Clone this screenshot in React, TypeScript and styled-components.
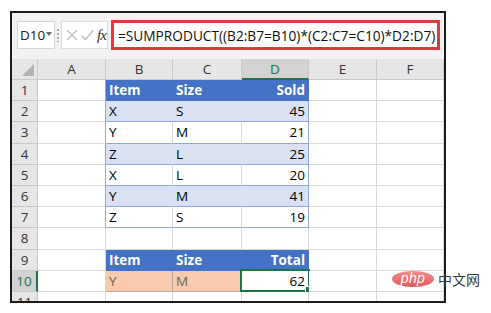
import React from "react";
import styled, { createGlobalStyle } from "styled-components";

const GlobalStyle = createGlobalStyle`
  html, body {
    margin: 0;
    padding: 0;
    background: #ffffff;
  }
  body {
    font-family: "Open Sans", "Liberation Sans", sans-serif;
    color: #000;
  }
`;

const GREEN = "#217346";
const GRID = "#d9d9d9";
const BLUE = "#4472c4";
const BAND = "#d9e1f2";
const TBORDER = "#8ea9db";
const ORANGE = "#f8cbad";

const COLS = ["A", "B", "C", "D", "E", "F"];
const WIDTHS = [26, 68, 67, 69, 67, 68, 67];

const Page = styled.div`
  position: relative;
  width: 491px;
  height: 313px;
  padding: 11px 0 0 10px;
  box-sizing: border-box;
`;

const Frame = styled.div`
  width: 436px;
  height: 292px;
  box-sizing: border-box;
  border: 2px solid #1c1c1c;
  overflow: hidden;
  background: #fff;
  display: flex;
  flex-direction: column;
`;

const FormulaBar = styled.div`
  height: 46px;
  flex: none;
  box-sizing: border-box;
  background: #f3f3f3;
  display: flex;
  align-items: flex-start;
  padding: 8px 0 0 5px;
  gap: 2px;
`;

const NameBox = styled.div`
  width: 38px;
  height: 28px;
  box-sizing: border-box;
  background: #fff;
  border: 1px solid #d4d4d4;
  display: flex;
  align-items: center;
  padding-left: 2px;
  font-size: 13.5px;
  color: #222;
  gap: 1px;
`;

const Caret = styled.span`
  width: 0;
  height: 0;
  border-left: 3px solid transparent;
  border-right: 3px solid transparent;
  border-top: 4px solid #666;
  margin-top: -2px;
`;

const Dots = styled.div`
  width: 2px;
  height: 14px;
  margin-top: 7px;
  background-image: radial-gradient(circle, #a6a6a6 0.8px, transparent 1px);
  background-size: 2px 4px;
`;

const FxBox = styled.div`
  width: 47px;
  height: 28px;
  box-sizing: border-box;
  background: #fff;
  border: 1px solid #dcdcdc;
  display: flex;
  align-items: center;
  padding-left: 3px;
  gap: 1px;
`;

const Fx = styled.span`
  font-family: "Liberation Serif", "DejaVu Serif", serif;
  font-style: italic;
  font-size: 15px;
  color: #333;
  margin-left: 1px;
  letter-spacing: -1px;
`;

const FormulaBox = styled.div`
  width: 329px;
  height: 30px;
  box-sizing: border-box;
  border: 3px solid #e0393e;
  background: #fff;
  display: flex;
  align-items: center;
  padding-left: 4px;
  font-size: 13.7px;
  color: #111;
  white-space: nowrap;
  margin-left: 1px;
  margin-top: -1px;
`;

const Grid = styled.div`
  display: grid;
  grid-template-columns: ${WIDTHS.map((w) => `${w}px`).join(" ")};
  grid-template-rows: 21px;
  grid-auto-rows: 21.2px;
`;

const Corner = styled.div`
  position: relative;
  background: #e6e6e6;
  border-right: 1px solid #c8c8c8;
  border-bottom: 1px solid #c8c8c8;
  box-sizing: border-box;

  &::after {
    content: "";
    position: absolute;
    right: 3px;
    bottom: 3px;
    width: 0;
    height: 0;
    border-left: 12px solid transparent;
    border-bottom: 12px solid #b3b3b3;
  }
`;

const ColHead = styled.div<{ $active?: boolean }>`
  box-sizing: border-box;
  background: ${(p) => (p.$active ? "#d2d2d2" : "#e6e6e6")};
  color: ${(p) => (p.$active ? GREEN : "#333")};
  border-right: 1px solid #c8c8c8;
  border-bottom: ${(p) => (p.$active ? `2px solid ${GREEN}` : "1px solid #c8c8c8")};
  font-size: 13.5px;
  display: flex;
  align-items: center;
  justify-content: center;
  padding-top: ${(p) => (p.$active ? "1px" : "0")};
`;

const RowHead = styled.div<{ $active?: boolean }>`
  box-sizing: border-box;
  background: ${(p) => (p.$active ? "#d2d2d2" : "#e6e6e6")};
  color: ${(p) => (p.$active ? GREEN : "#333")};
  border-right: ${(p) => (p.$active ? `2px solid ${GREEN}` : "1px solid #c8c8c8")};
  border-bottom: 1px solid #c8c8c8;
  font-size: 13.5px;
  display: flex;
  align-items: center;
  justify-content: center;
`;

type CellStyle = {
  bg?: string;
  rb?: string;
  bb?: string;
  color?: string;
  bold?: boolean;
  right?: boolean;
};

const Cell = styled.div<{
  $bg: string;
  $rb: string;
  $bb: string;
  $color: string;
  $bold: boolean;
  $right: boolean;
}>`
  position: relative;
  box-sizing: border-box;
  background: ${(p) => p.$bg};
  border-right: 1px solid ${(p) => p.$rb};
  border-bottom: 1px solid ${(p) => p.$bb};
  color: ${(p) => p.$color};
  font-weight: ${(p) => (p.$bold ? 700 : 400)};
  font-size: 13.5px;
  display: flex;
  align-items: center;
  justify-content: ${(p) => (p.$right ? "flex-end" : "flex-start")};
  padding: 0 3px;
  white-space: nowrap;
`;

const Selection = styled.div`
  position: absolute;
  inset: -2px -2px -1px -2px;
  border: 2px solid ${GREEN};
  pointer-events: none;
`;

const Handle = styled.div`
  position: absolute;
  right: -5px;
  bottom: -4px;
  width: 6px;
  height: 6px;
  background: ${GREEN};
  border: 1px solid #fff;
`;

const Watermark = styled.div`
  position: absolute;
  left: 392px;
  top: 271px;
  display: flex;
  align-items: center;
  gap: 4px;
`;

const Pill = styled.div`
  width: 42px;
  height: 16px;
  border-radius: 50%;
  background: linear-gradient(180deg, #f28a8b, #e45a5d);
  color: #fff;
  font-family: "Liberation Sans", sans-serif;
  font-style: italic;
  font-size: 14px;
  line-height: 15px;
  text-align: center;
  letter-spacing: 0.3px;
`;

const WmText = styled.span`
  font-family: "Noto Sans CJK SC", sans-serif;
  font-size: 14px;
  color: #3a3a3a;
  line-height: 16px;
`;

const items: [string, string, number][] = [
  ["X", "S", 45],
  ["Y", "M", 21],
  ["Z", "L", 25],
  ["X", "L", 20],
  ["Y", "M", 41],
  ["Z", "S", 19],
];

type CellData = { text?: string | number; style?: CellStyle; selected?: boolean };

const buildRows = (): CellData[][] => {
  const rows: CellData[][] = [];
  const empty = (): CellData[] => COLS.map(() => ({}));

  const header = (labels: string[]) => {
    const r = empty();
    r[0] = { style: { rb: TBORDER } };
    labels.forEach((l, i) => {
      r[i + 1] = {
        text: l,
        style: { bg: BLUE, rb: BLUE, bb: BLUE, color: "#fff", bold: true, right: i === 2 },
      };
    });
    return r;
  };

  rows.push(header(["Item", "Size", "Sold"]));
  items.forEach(([it, sz, n], idx) => {
    const band = idx % 2 === 0;
    const r = empty();
    r[0] = { style: { rb: TBORDER } };
    const base: CellStyle = { bg: band ? BAND : "#fff", bb: TBORDER };
    r[1] = { text: it, style: { ...base, rb: band ? BAND : GRID } };
    r[2] = { text: sz, style: { ...base, rb: band ? BAND : GRID } };
    r[3] = { text: n, style: { ...base, rb: TBORDER, right: true } };
    rows.push(r);
  });
  rows.push(empty());
  const h2 = header(["Item", "Size", "Total"]);
  h2[0] = {};
  rows.push(h2);
  const r10 = empty();
  r10[1] = { text: "Y", style: { bg: ORANGE, rb: "#b9aa9e", bb: "#b9aa9e", color: "#6e5f55" } };
  r10[2] = { text: "M", style: { bg: ORANGE, rb: "#b9aa9e", bb: "#b9aa9e", color: "#6e5f55" } };
  r10[3] = { text: 62, style: { right: true }, selected: true };
  rows.push(r10);
  rows.push(empty());
  return rows;
};

const X = () => (
  <svg width="14" height="14" viewBox="0 0 14 14">
    <path d="M2 2 L12 12 M12 2 L2 12" stroke="#c4c4c4" strokeWidth="1.6" fill="none" />
  </svg>
);

const Check = () => (
  <svg width="15" height="14" viewBox="0 0 15 14">
    <path d="M1.5 7.5 L5.5 11.5 L13.5 2" stroke="#c4c4c4" strokeWidth="1.6" fill="none" />
  </svg>
);

const App: React.FC = () => {
  const rows = buildRows();
  return (
    <Page>
      <GlobalStyle />
      <Frame>
        <FormulaBar>
          <NameBox>
            D10
            <Caret />
          </NameBox>
          <Dots />
          <FxBox>
            <X />
            <Check />
            <Fx>fx</Fx>
          </FxBox>
          <FormulaBox>=SUMPRODUCT((B2:B7=B10)*(C2:C7=C10)*D2:D7)</FormulaBox>
        </FormulaBar>
        <Grid>
          <Corner />
          {COLS.map((c) => (
            <ColHead key={c} $active={c === "D"}>
              {c}
            </ColHead>
          ))}
          {rows.map((row, ri) => (
            <React.Fragment key={ri}>
              <RowHead $active={ri === 9}>{ri + 1}</RowHead>
              {row.map((cell, ci) => {
                const s = cell.style || {};
                return (
                  <Cell
                    key={ci}
                    $bg={s.bg || "#fff"}
                    $rb={s.rb || GRID}
                    $bb={s.bb || GRID}
                    $color={s.color || "#000"}
                    $bold={!!s.bold}
                    $right={!!s.right}
                  >
                    {cell.text}
                    {cell.selected && (
                      <Selection>
                        <Handle />
                      </Selection>
                    )}
                  </Cell>
                );
              })}
            </React.Fragment>
          ))}
        </Grid>
      </Frame>
      <Watermark>
        <Pill>php</Pill>
        <WmText>中文网</WmText>
      </Watermark>
    </Page>
  );
};

export default App;
